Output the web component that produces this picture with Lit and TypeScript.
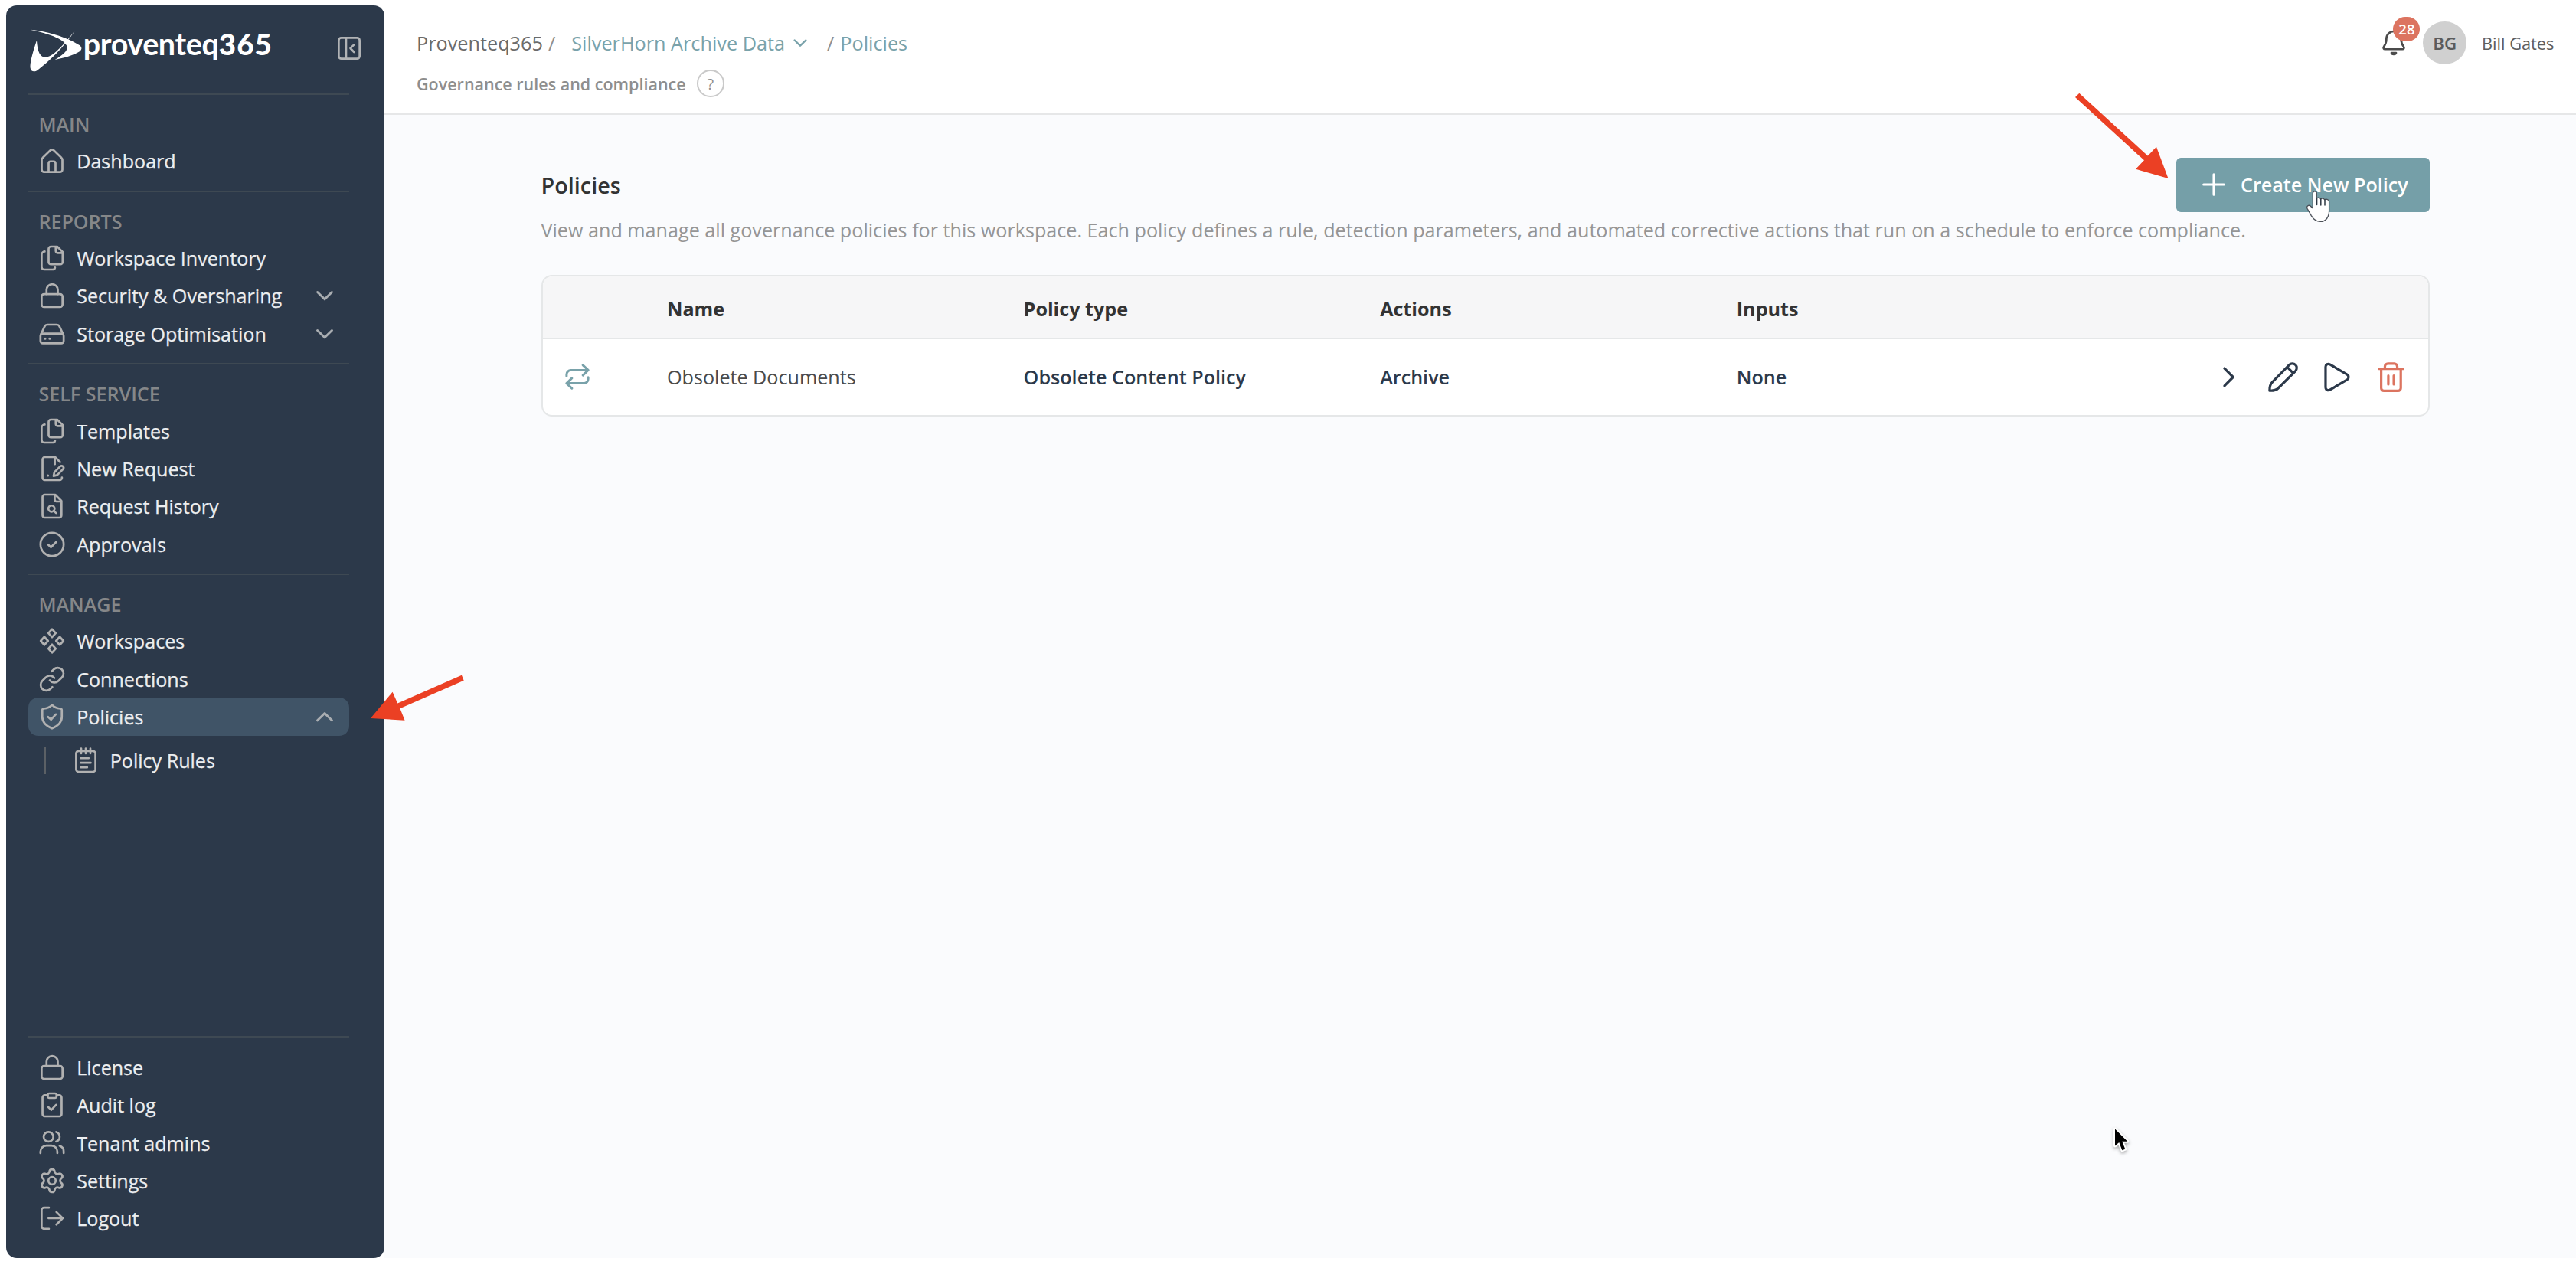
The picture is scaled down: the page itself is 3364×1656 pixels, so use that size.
import { LitElement, html, svg, css, nothing, type TemplateResult, type SVGTemplateResult } from "lit";
import { customElement, property } from "lit/decorators.js";
import { classMap } from "lit/directives/class-map.js";

const FILE_BODY = "M3.7 4a2 2 0 0 1 2-2h9l5.5 5.5V20a2 2 0 0 1-2 2H5.700a2 2 0 0 1-2-2z";

const ICONS: Record<string, SVGTemplateResult> = {
  home: svg`<path d="M3 11.200a2.500 2.500 0 0 1 .85-1.900l6.700-6.400a2.100 2.100 0 0 1 2.900 0l6.700 6.400a2.500 2.500 0 0 1 .85 1.900V19.700a2.100 2.100 0 0 1-2.100 2.100H5.100A2.100 2.100 0 0 1 3 19.700z"/><path d="M9 21.700v-7.600a1.600 1.600 0 0 1 1.600-1.600h2.800a1.600 1.600 0 0 1 1.600 1.600v7.600"/>`,
  files: svg`<path d="M9 4a2 2 0 0 1 2-2h5.500L21.200 6.700v8.800a2 2 0 0 1-2 2H11a2 2 0 0 1-2-2z"/><path d="M15.200 2.200v3.600a1.800 1.800 0 0 0 1.800 1.800h4"/><path d="M5.600 6.300A2.800 2.800 0 0 0 2.900 9v10.600A2.400 2.400 0 0 0 5.300 22h7.300a2 2 0 0 0 2-1.700"/>`,
  lock: svg`<rect x="2.900" y="10.700" width="18.200" height="11.300" rx="2.200"/><path d="M7.200 10.700V7a4.900 4.900 0 0 1 9.800 0v3.700"/>`,
  drive: svg`<rect x="1.900" y="11.800" width="20.200" height="8.400" rx="2"/><path d="M2.200 12.500l3.500-7.200a2.300 2.300 0 0 1 2.100-1.300h8.400a2.300 2.300 0 0 1 2.100 1.300l3.500 7.200"/><path d="M6 16.100v.01M9.900 16.100v.01" stroke-width="2"/>`,
  fileEdit: svg`<path d="M20.600 19.700v.3a2 2 0 0 1-2 2H5.700a2 2 0 0 1-2-2V4a2 2 0 0 1 2-2h9L19 6.300"/><path d="M14.400 2.200v5.900"/><path d="M13.300 18.400l.7-3.200 5-5.100a1.700 1.700 0 0 1 2.500 2.400l-5 5.100z"/><path d="M8.400 18v.01" stroke-width="2"/>`,
  fileSearch: svg`<path d=${FILE_BODY}/><path d="M14.300 2.200V6.400a1.600 1.600 0 0 0 1.600 1.600h4"/><circle cx="11.500" cy="14.200" r="2.700"/><path d="M13.500 16.100l2 2"/>`,
  checkCircle: svg`<circle cx="12" cy="12" r="10.100"/><path d="M8.700 12.300l2.300 2.200 4.500-4.500"/>`,
  diamonds: svg`${[[12, 5.3], [12, 18.7], [5.3, 12], [18.7, 12]].map(([x, y]) => svg`<path d="M${x - 3.2} ${y}l3.200-3.500 3.200 3.500-3.200 3.500z"/>`)}`,
  link: svg`<path d="M10 13a5 5 0 0 0 7.540.54l3-3a5 5 0 0 0-7.070-7.070l-1.720 1.710"/><path d="M14 11a5 5 0 0 0-7.540-.54l-3 3a5 5 0 0 0 7.070 7.070l1.710-1.710"/>`,
  shield: svg`<path d="M12 1.700c1.500 1.600 4.400 3 7.400 3.300.7.100 1.100.5 1.100 1.200v6c0 4.600-3.500 7.900-8.500 10-5-2.100-8.500-5.400-8.500-10v-6c0-.7.4-1.100 1.100-1.200 3-.3 5.900-1.700 7.400-3.300z"/><path d="M8.500 12.100l2.600 2.400 4.200-4.600"/>`,
  notes: svg`<rect x="3.600" y="3.900" width="16.800" height="18.100" rx="2.200"/><path d="M8 1.700v4.300M12 1.700v4.300M16 1.700v4.300M7.700 10.100h6.800M7.700 14.100h8.600M7.700 18.100h5.500"/>`,
  clipboard: svg`<path d="M8.300 3.600H5.700a2 2 0 0 0-2 2V20a2 2 0 0 0 2 2h12.600a2 2 0 0 0 2-2V5.600a2 2 0 0 0-2-2H16"/><rect x="8.100" y="2" width="7.900" height="4" rx="1.500"/><path d="M8.800 14l2.500 2.400 4.200-4.500"/>`,
  users: svg`<circle cx="8.900" cy="7.100" r="4.200"/><path d="M1.900 21.300v-1.300a5.200 5.200 0 0 1 5.200-5.200h4.300a5.200 5.200 0 0 1 5.200 5.200v1.300"/><path d="M15.600 3a4.300 4.300 0 0 1 0 8.200M18.600 15a5 5 0 0 1 3.500 4.800v1.500"/>`,
  gear: svg`<path d="M9.671 4.136a2.340 2.340 0 0 1 4.659 0 2.340 2.340 0 0 0 3.319 1.915 2.340 2.340 0 0 1 2.330 4.033 2.340 2.340 0 0 0 0 3.831 2.340 2.340 0 0 1-2.330 4.033 2.340 2.340 0 0 0-3.319 1.915 2.340 2.340 0 0 1-4.659 0 2.340 2.340 0 0 0-3.320-1.915 2.340 2.340 0 0 1-2.330-4.033 2.340 2.340 0 0 0 0-3.831A2.340 2.340 0 0 1 6.350 6.051a2.340 2.340 0 0 0 3.319-1.915z"/><circle cx="12" cy="12" r="3.200"/>`,
  logout: svg`<path d="M9.300 2.800H5a2.100 2.100 0 0 0-2.100 2.100v14.200A2.100 2.100 0 0 0 5 21.200h4.300M8.900 12h12.400M15.800 6.600l5.500 5.400-5.500 5.500"/>`,
  collapse: svg`<rect x="2.900" y="2.900" width="18.200" height="18.200" rx="2.200"/><path d="M9.300 3v18M16.200 8.900L13 12l3.200 3.300"/>`,
  bell: svg`<path d="M12 2a6.400 6.400 0 0 0-6.400 6.300c0 4-1.200 5.600-2.300 7.200-.6.900 0 2 1 2h15.400c1 0 1.600-1.100 1-2-1.100-1.600-2.300-3.200-2.300-7.200A6.400 6.400 0 0 0 12 2z"/><path d="M10 20.700c.3 1.700 3.700 1.700 4 0z" fill="currentColor"/>`,
  repeat: svg`<path d="M2.600 11.500V10a3.700 3.700 0 0 1 3.700-3.700h15M16.800 1.900l4.600 4.400-4.600 4.400M21.400 12.500V14a3.700 3.700 0 0 1-3.700 3.700h-15M7.200 22.100l-4.600-4.400 4.600-4.400"/>`,
  down: svg`<path d="M5.700 9l6.300 6.200L18.300 9"/>`,
  up: svg`<path d="M5.700 15.200L12 9l6.300 6.200"/>`,
  right: svg`<path d="M8.900 5.600l6.300 6.400-6.300 6.400"/>`,
  pencil: svg`<path d="M2.200 21.900c-.1-2.600.6-4.900 1.900-6.200L16.400 3.100a3.200 3.200 0 0 1 4.600 4.500L8.400 20.100c-1.300 1.300-3.600 1.900-6.200 1.800zM15 4.700l4.400 4.400"/>`,
  play: svg`<path d="M3.900 4.500v15c0 1.700 1.700 2.600 3.100 1.800l12.600-7.400c1.400-.9 1.400-2.900 0-3.800L7 2.700c-1.400-.8-3.100.1-3.100 1.800z"/>`,
  trash: svg`<path d="M3.200 6h17.700M7.500 5.900V4.300a2.200 2.200 0 0 1 2.200-2.200h4.600a2.200 2.200 0 0 1 2.200 2.200v1.600M4.800 6v14a2 2 0 0 0 2 2h10.300a2 2 0 0 0 2-2V6M10 11v6.300M14 11v6.300"/>`,
  plus: svg`<path d="M12 2v20M2 12h20"/>`,
};

interface NavItem { icon: string; label: string; toggle?: "up" | "down"; active?: boolean; children?: NavItem[] }
interface NavSection { title: string; items: NavItem[] }

const SECTIONS: NavSection[] = [
  { title: "MAIN", items: [{ icon: "home", label: "Dashboard" }] },
  { title: "REPORTS", items: [
    { icon: "files", label: "Workspace Inventory" },
    { icon: "lock", label: "Security & Oversharing", toggle: "down" },
    { icon: "drive", label: "Storage Optimisation", toggle: "down" },
  ] },
  { title: "SELF SERVICE", items: [
    { icon: "files", label: "Templates" },
    { icon: "fileEdit", label: "New Request" },
    { icon: "fileSearch", label: "Request History" },
    { icon: "checkCircle", label: "Approvals" },
  ] },
  { title: "MANAGE", items: [
    { icon: "diamonds", label: "Workspaces" },
    { icon: "link", label: "Connections" },
    { icon: "shield", label: "Policies", toggle: "up", active: true, children: [{ icon: "notes", label: "Policy Rules" }] },
  ] },
];

const FOOTER: NavItem[] = [
  { icon: "lock", label: "License" },
  { icon: "clipboard", label: "Audit log" },
  { icon: "users", label: "Tenant admins" },
  { icon: "gear", label: "Settings" },
  { icon: "logout", label: "Logout" },
];

@customElement("ui-icon")
export class UiIcon extends LitElement {
  @property() name = "";
  static styles = css`
    :host { display: block; flex: none; width: 36px; height: 36px; }
    .glyph {
      display: block; width: 100%; height: 100%; overflow: visible;
      fill: none; stroke: currentColor; stroke-width: var(--icon-stroke, 1.8);
      stroke-linecap: round; stroke-linejoin: round;
    }
  `;
  render() {
    return html`<svg class="glyph" viewBox="0 0 24 24" aria-hidden="true">${ICONS[this.name] ?? nothing}</svg>`;
  }
}

@customElement("app-sidebar")
export class AppSidebar extends LitElement {
  static styles = css`
    :host {
      display: flex; flex-direction: column; box-sizing: border-box;
      width: 493.500px; height: 1636.500px; padding: 0 46px 27.400px 28.700px;
      border-radius: 14px; background: #2c394a; color: #eceef0;
      font-size: 25.100px; line-height: 34px;
    }
    .brand { display: flex; align-items: center; justify-content: space-between; height: 115.500px; box-sizing: border-box; padding-bottom: 2px; }
    .logo { display: block; width: 252px; height: 67px; overflow: visible; fill: #fff; font-family: Lato, "Open Sans", sans-serif; }
    .logo-name { font-size: 39.500px; font-weight: 700; }
    .logo-suffix { font-size: 38.500px; font-weight: 900; }
    .collapse { color: #b1b3b5; margin-right: -18px; }
    .divider { height: 2px; background: #3e4953; flex: none; }
    .section { padding-bottom: 14.200px; }
    .title { height: 34px; padding: 20.600px 0 6.800px 13.700px; color: #858789; font-weight: 600; }
    .item {
      display: flex; align-items: center; gap: 14px; box-sizing: border-box;
      height: 49.330px; padding: 0 13.500px; border-radius: 13px;
      -webkit-text-stroke: 0.250px currentColor;
    }
    .item.active { background: #405467; }
    .item ui-icon { color: #b1b1b1; }
    .text { flex: 1; white-space: nowrap; }
    .item .chevron { --icon-stroke: 2; color: #a9adb1; }
    .children { display: flex; align-items: center; margin: 14px 0 0 21px; border-left: 2px solid #5b6065; height: 36px; }
    .children .item { padding-left: 34px; }
    .footer { margin-top: auto; }
    .footer-list { padding-top: 14.300px; }
    .footer-list .text { padding-top: 1px; }
  `;
  private item(i: NavItem): TemplateResult {
    return html`
      <div class=${classMap({ item: true, active: !!i.active })}>
        <ui-icon name=${i.icon}></ui-icon>
        <span class="text">${i.label}</span>
        ${i.toggle ? html`<ui-icon class="chevron" name=${i.toggle}></ui-icon>` : nothing}
      </div>
      ${i.children ? html`<div class="children">${i.children.map((c) => this.item(c))}</div>` : nothing}
    `;
  }
  render() {
    return html`
      <div class="brand">
        <svg class="logo" viewBox="36.700 30 252 67" role="img" aria-label="proventeq365">
          <g transform="scale(0.333333)">
            <path d="M143 158C124 215 116 248 118 266C120 281 134 283 146 275C192 240 245 190 293 120C245 178 212 218 180 224C158 226 146 206 143 158Z"/>
            <path d="M118 116C195 124 270 150 312 178Q325 190 312 201C285 217 250 227 214 234C246 215 264 200 262 183C254 155 200 134 118 116Z"/>
          </g>
          <text class="logo-name" x="108.500" y="72" textLength="177">proventeq</text>
          <text class="logo-suffix" x="285.500" y="72" textLength="69">365</text>
        </svg>
        <ui-icon class="collapse" name="collapse"></ui-icon>
      </div>
      ${SECTIONS.map((s) => html`
        <div class="divider"></div>
        <div class="section">
          <div class="title">${s.title}</div>
          ${s.items.map((i) => this.item(i))}
        </div>
      `)}
      <div class="footer">
        <div class="divider"></div>
        <div class="footer-list">${FOOTER.map((i) => this.item(i))}</div>
      </div>
    `;
  }
}

@customElement("app-header")
export class AppHeader extends LitElement {
  static styles = css`
    :host {
      display: flex; justify-content: space-between; box-sizing: border-box; height: 150px;
      padding: 0 28.500px 0 42.500px; border-bottom: 2.500px solid #e6e7e8; background: #fff;
    }
    .trail { padding-top: 38px; }
    .crumbs { display: flex; align-items: center; height: 36px; font-size: 25.250px; color: #6b6b6b; white-space: pre; }
    .slash { color: #8f8f8f; }
    .slash.first { padding: 0 21px 0 7px; }
    .slash.last { padding: 0 8px 0 21px; }
    .link { color: #79a2aa; }
    .crumbs ui-icon { width: 28px; height: 28px; margin-left: 6px; color: #79a2aa; --icon-stroke: 2.100; }
    .sub { display: flex; align-items: center; gap: 14.500px; margin-top: 17px; height: 36px; font-size: 21.500px; font-weight: 600; color: #8e8e8e; }
    .help {
      box-sizing: border-box; width: 35.500px; height: 35.500px; border: 2px solid #c9c9c9; border-radius: 50%;
      display: flex; align-items: center; justify-content: center; font-size: 20px; font-weight: 400; color: #8f8f8f;
    }
    .user { display: flex; align-items: center; height: 56px; margin-top: 28px; color: #5e5e5e; font-size: 21.800px; }
    .bell { position: relative; color: #4b4b4b; }
    .badge {
      position: absolute; left: 17.500px; top: -16.500px; width: 35px; height: 32px; border-radius: 16px;
      display: flex; align-items: center; justify-content: center;
      background: #dc7460; color: #fff; font-size: 18.500px; font-weight: 600;
    }
    .avatar {
      width: 56.500px; height: 56.500px; margin: 0 20px 0 20.500px; border-radius: 50%; background: #d0d0d0;
      display: flex; align-items: center; justify-content: center; font-size: 22.300px; font-weight: 600; color: #5b5b5b;
    }
  `;
  render() {
    return html`
      <div class="trail">
        <div class="crumbs">
          <span>Proventeq365</span><span class="slash first">/</span>
          <span class="link">SilverHorn Archive Data</span><ui-icon name="down"></ui-icon>
          <span class="slash last">/</span><span class="link">Policies</span>
        </div>
        <div class="sub"><span>Governance rules and compliance</span><span class="help">?</span></div>
      </div>
      <div class="user">
        <div class="bell"><ui-icon name="bell"></ui-icon><span class="badge">28</span></div>
        <div class="avatar">BG</div>
        <span>Bill Gates</span>
      </div>
    `;
  }
}

@customElement("policies-page")
export class PoliciesPage extends LitElement {
  static styles = css`
    :host { display: block; flex: 1; padding: 56px 191px 0 205px; background: #fafbfd; }
    .top { display: flex; align-items: center; justify-content: space-between; height: 70.500px; }
    .heading { margin: 0; padding-top: 1px; font-size: 28.800px; font-weight: 600; color: #333; }
    .create {
      display: flex; align-items: center; gap: 19px; box-sizing: border-box; width: 331px; height: 70.500px; padding: 0 0 0 33px;
      border: 0; border-radius: 6px; background: #759fa8; color: #fff; font: inherit; font-size: 25.150px; font-weight: 600; white-space: nowrap;
    }
    .create ui-icon { width: 32px; height: 32px; --icon-stroke: 2.300; }
    .about { height: 34px; margin: 6px 0 42.500px; font-size: 25.160px; line-height: 34px; color: #959595; white-space: nowrap; }
    .table { box-sizing: border-box; border: 2px solid #e5e7e8; border-radius: 14px; overflow: hidden; background: #fff; color: #2c394a; font-size: 25.150px; }
    .row { display: grid; grid-template-columns: 162.500px repeat(3, 465.600px) 1fr auto; align-items: center; height: 98.500px; }
    .row.head { height: 77px; padding-top: 3px; box-sizing: content-box; border-bottom: 2.500px solid #e5e7e8; background: #f6f6f7; color: #333; font-weight: 700; }
    .sync { margin-left: 27px; color: #79a2aa; --icon-stroke: 2; }
    .name { color: #4a4a4a; }
    .strong { font-weight: 600; }
    .actions { display: flex; gap: 27.500px; padding-right: 27.500px; }
    .actions ui-icon { width: 43px; height: 43px; --icon-stroke: 1.800; }
    .danger { color: #dc7460; }
  `;
  render() {
    return html`
      <div class="top">
        <h1 class="heading">Policies</h1>
        <button class="create"><ui-icon name="plus"></ui-icon>Create New Policy</button>
      </div>
      <p class="about">View and manage all governance policies for this workspace. Each policy defines a rule, detection parameters, and automated corrective actions that run on a schedule to enforce compliance.</p>
      <div class="table">
        <div class="row head"><span></span><span>Name</span><span>Policy type</span><span>Actions</span><span>Inputs</span></div>
        <div class="row">
          <ui-icon class="sync" name="repeat"></ui-icon>
          <span class="name">Obsolete Documents</span>
          <span class="strong">Obsolete Content Policy</span>
          <span class="strong">Archive</span>
          <span class="strong">None</span>
          <div class="actions">
            <ui-icon name="right"></ui-icon><ui-icon name="pencil"></ui-icon>
            <ui-icon name="play"></ui-icon><ui-icon class="danger" name="trash"></ui-icon>
          </div>
        </div>
      </div>
    `;
  }
}

@customElement("app-root")
export class AppRoot extends LitElement {
  static styles = css`
    :host {
      display: block; position: relative; width: 3364px; height: 1656px; overflow: hidden; background: #fff;
      font-family: "Open Sans", "Noto Sans", sans-serif;
    }
    .shell { display: flex; height: 1643px; }
    .side { padding: 6.500px 0 0 8px; }
    .main { flex: 1; min-width: 0; display: flex; flex-direction: column; }
    .annotations { position: absolute; inset: 0; width: 3364px; height: 1656px; pointer-events: none; }
    .arrow { fill: #eb4024; }
    .hand { fill: #fff; stroke: #4a4f57; stroke-width: 1.300; stroke-linejoin: round; }
    .creases { fill: none; stroke: #2d3742; stroke-width: 1.500; stroke-linecap: round; }
    .pointer { fill: #000; stroke: #fff; stroke-width: 4; stroke-linejoin: round; paint-order: stroke; filter: drop-shadow(0 2px 2px rgba(0, 0, 0, 0.35)); }
  `;
  render() {
    return html`
      <div class="shell">
        <div class="side"><app-sidebar></app-sidebar></div>
        <div class="main"><app-header></app-header><policies-page></policies-page></div>
      </div>
      <svg class="annotations" viewBox="0 0 3364 1656" aria-hidden="true">
        <path class="arrow" d="M2715.300 121.700L2804.800 203.600L2816 191.700L2831.500 233L2789 220.700L2800 209.300L2710 127Z"/>
        <path class="arrow" d="M484 938L512.600 903.700L519.200 918.500L602.900 881.700L605.700 888.700L522.400 925.300L528.600 940.700Z"/>
        <path class="hand" d="M3020.300 252.400a2.500 2.500 0 0 1 5 0v7.200c.7-1.900 4.500-1.900 5.200.4 .9-1.600 4.500-1.300 5.200.9 1.300-1.300 5.500-.8 5.900 2.200v12c0 8-3.900 14.300-11.300 14.300-5.800 0-9.300-3.300-12-7.800l-5.300-9.400c-1.200-2.900 1.900-5 4.200-3.200l3.100 3z"/>
        <path class="creases" d="M3025.600 259.500v8M3030.800 260v8M3036 261v7"/>
        <path class="pointer" d="M2762 1474.500V1496.500L2767.300 1492L2771.300 1502.300L2775.300 1500.700L2771.200 1490.700H2778.300Z"/>
      </svg>
    `;
  }
}
